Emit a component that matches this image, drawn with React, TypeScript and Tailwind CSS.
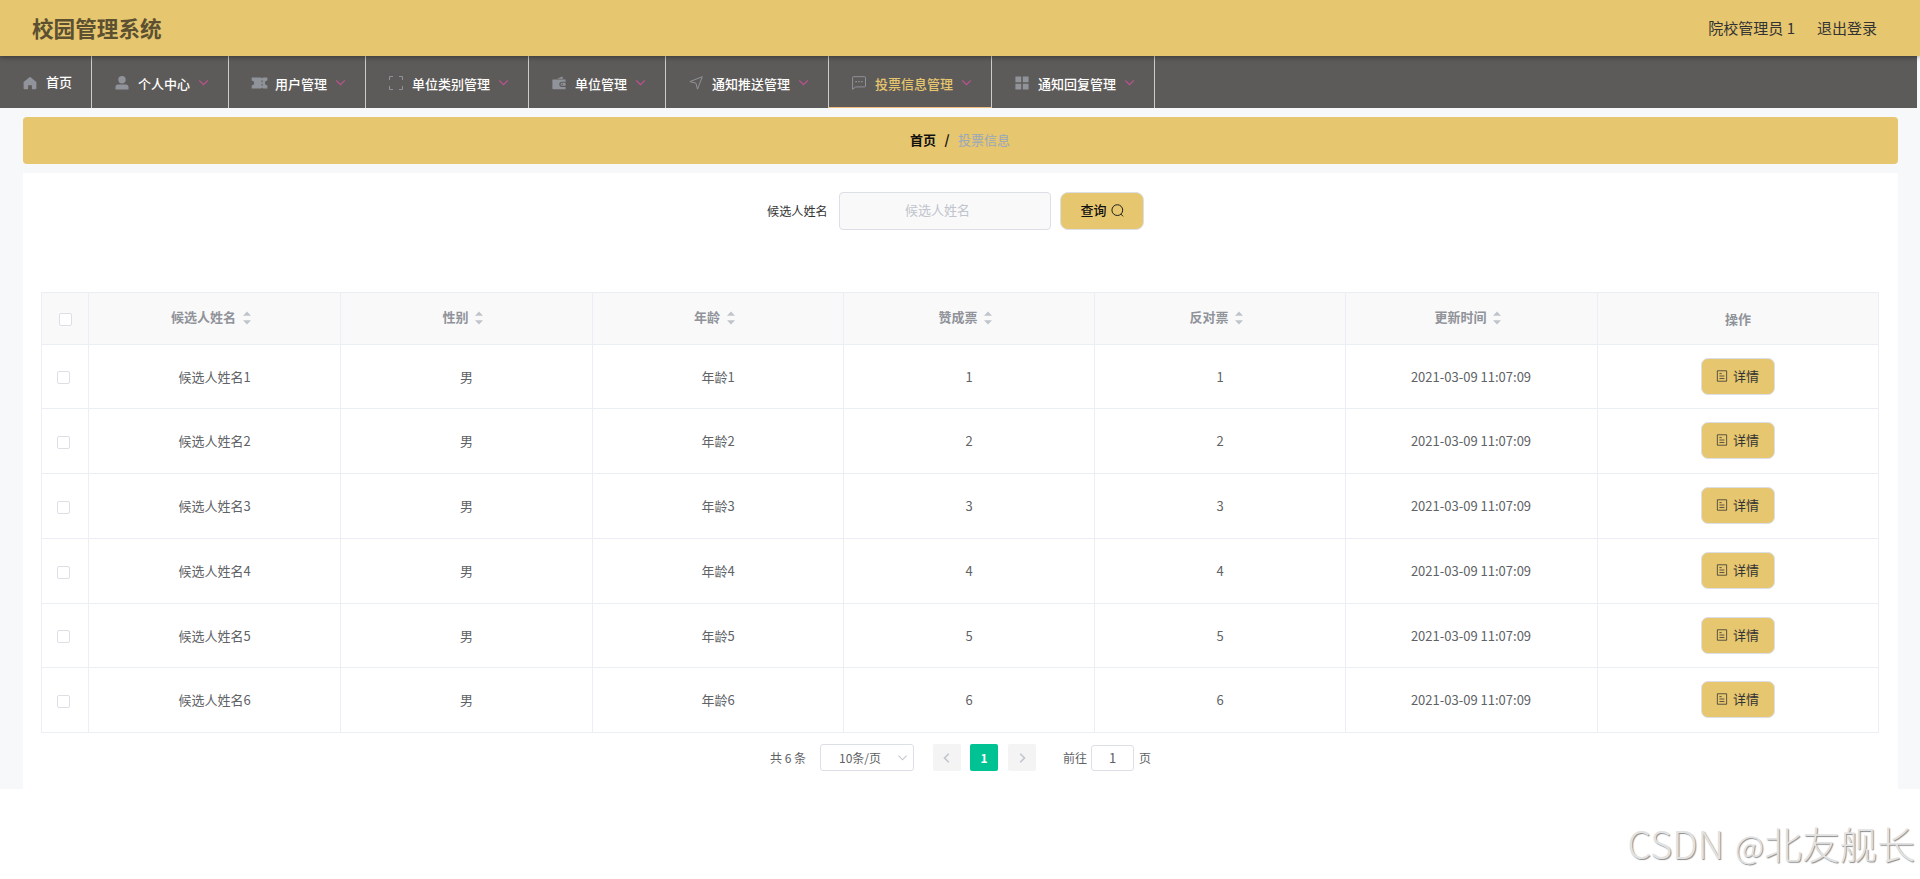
import type { ReactNode } from "react";
import { clsx } from "clsx";

interface IconProps {
  className?: string;
  children: ReactNode;
}

function Icon({ className, children }: IconProps) {
  return (
    <svg viewBox="0 0 14 14" fill="none" stroke="currentColor" className={clsx("shrink-0", className)}>
      {children}
    </svg>
  );
}

const navIcons: Record<string, ReactNode> = {
  home: (
    <path d="M7 .8 13.4 6v6.2a1 1 0 0 1-1 1H8.9V9.3H5.1v3.9H1.6a1 1 0 0 1-1-1V6z" fill="currentColor" stroke="none" />
  ),
  user: (
    <g fill="currentColor" stroke="none">
      <circle cx="7" cy="3.8" r="3.7" />
      <path d="M.5 13.4v-2.2a2.6 2.6 0 0 1 2.6-2.6h7.8a2.6 2.6 0 0 1 2.6 2.6v2.2z" />
    </g>
  ),
  ticket: (
    <g fill="currentColor" stroke="none">
      <path d="M-.3 1.5h9.4l.9 1 .9-1H15.4v3a2.5 2.5 0 0 0 0 5v3h-4.5l-.9-1-.9 1H-.3v-3a2.5 2.5 0 0 0 0-5z" />
      <path d="M9.6 4.2h.9v2h-.9zM9.6 7.8h.9v2h-.9z" fill="#5d5b59" />
    </g>
  ),
  fullscreen: <path d="M.5 4V.5H4M10 .5h3.5V4M13.5 10v3.5H10M4 13.5H.5V10" />,
  wallet: (
    <g fill="currentColor" stroke="none">
      <path d="M.4 3.4h13.2v2.3H9.9a2.6 2.6 0 0 0 0 5.2h3.7v2.4H1.2a.8.8 0 0 1-.8-.8z" />
      <path d="M5 2.8 10.2.4l1 2.4z" />
      <path d="M10 6.8h3.6v3H10a1.5 1.5 0 0 1 0-3z" />
      <circle cx="10.3" cy="8.3" r=".7" fill="#5d5b59" />
    </g>
  ),
  position: <path d="M13.3.7.9 5.6 6.9 7.2 8.5 13.2z" strokeLinejoin="round" />,
  chat: (
    <>
      <path d="M1.2.7h11.6a.7.7 0 0 1 .7.7v8.8a.7.7 0 0 1-.7.7H3.7L.6 13.3V1.4a.7.7 0 0 1 .6-.7z" />
      <path d="M3.3 5.6h1.6M6.2 5.6h1.6M9.1 5.6h1.6" strokeWidth="1.2" />
    </>
  ),
  grid: (
    <path d="M.4.6h5.8v5.6H.4zM7.8.6h5.8v5.6H7.8zM.4 7.8h5.8v5.6H.4zM7.8 7.8h5.8v5.6H7.8z" fill="currentColor" stroke="none" />
  ),
};

const navItems = [
  { label: "个人中心", icon: "user" },
  { label: "用户管理", icon: "ticket" },
  { label: "单位类别管理", icon: "fullscreen" },
  { label: "单位管理", icon: "wallet" },
  { label: "通知推送管理", icon: "position" },
  { label: "投票信息管理", icon: "chat", active: true },
  { label: "通知回复管理", icon: "grid" },
];

const columns = ["候选人姓名", "性别", "年龄", "赞成票", "反对票", "更新时间"];

const rows = [1, 2, 3, 4, 5, 6].map((n) => ({
  id: n,
  cells: [`候选人姓名${n}`, "男", `年龄${n}`, `${n}`, `${n}`, "2021-03-09 11:07:09"],
}));

const rowHeights = ["h-[64px]", "h-[65px]", "h-[65px]", "h-[65px]", "h-[64px]", "h-[65px]"];

const gridCols = "grid grid-cols-[47px_252px_252px_251px_251px_251px_252px_281px]";
const cell = "flex items-center justify-center border-r border-b border-[#ebeef5]";

function Header() {
  return (
    <header className="relative z-10 flex h-14 items-center justify-between bg-[#e6c66f] pr-[43px] pl-8 shadow-[0_1px_5px_rgba(0,0,0,0.4)]">
      <h1 className="pb-px text-[21.6px] leading-none font-bold text-[#5c5030]">校园管理系统</h1>
      <div className="flex gap-[22px] text-[15px] leading-5 text-[#333]">
        <span>院校管理员 1</span>
        <span>退出登录</span>
      </div>
    </header>
  );
}

function NavBar() {
  return (
    <nav className="flex h-[52px] w-[1917px] bg-[#5d5b59] text-[13px] font-medium text-white">
      <div className="flex w-[92px] items-center border-r border-[#ccc] pb-px pl-[23px]">
        <Icon className="mt-0.5 mr-[9px] size-3.5 text-[#909399]">{navIcons.home}</Icon>
        <span>首页</span>
      </div>
      {navItems.map((item) => (
        <div
          key={item.label}
          className={clsx(
            "flex items-center border-r border-[#ccc] pt-[3px] pl-[23px]",
            item.label.length === 4 ? "w-[137px]" : "w-[163px]",
            item.active && "text-[#e6c66f] shadow-[inset_0_-1px_0_#f0bd7c]"
          )}
        >
          <Icon className="mr-[9px] mb-px size-3.5 overflow-visible text-[#909399]">{navIcons[item.icon]}</Icon>
          <span>{item.label}</span>
          <Icon className="mb-0.5 ml-[9px] size-[9px] text-[#c0508f]">
            <path d="M.3 3.8 7 10.5l6.7-6.7" strokeWidth="1.8" />
          </Icon>
        </div>
      ))}
    </nav>
  );
}

function SearchForm() {
  return (
    <div className="flex h-[38px] items-center pl-[744px]">
      <label className="w-[72px] text-[12.15px] text-[#333]">候选人姓名</label>
      <input
        placeholder="候选人姓名"
        className="h-[38px] w-[212px] rounded border border-[#dcdfe6] bg-[#f9f9f9] pr-[27px] pb-[3px] pl-3 text-center text-[13px] outline-none placeholder:text-[#c0c4cc]"
      />
      <button className="ml-[9px] flex h-[38px] w-[84px] items-center justify-center gap-1 rounded-[8px] border border-[#dcdfe6] bg-[#e6c66f] pb-0.5 text-[13px] font-medium text-[#111]">
        查询
        <Icon className="size-[13px]">
          <circle cx="6.8" cy="6.6" r="5.8" />
          <path d="m10.6 10.8 2.4 2.5" />
        </Icon>
      </button>
    </div>
  );
}

function Checkbox() {
  return <span className="size-[13px] rounded-[2px] border border-[#dcdfe6] bg-white" />;
}

function DataTable() {
  return (
    <div className="w-[1838px] border-t border-l border-[#ebeef5] text-[13px] text-[#606266]">
      <div className={clsx(gridCols, "h-[52px] bg-[#f9f9f9] font-bold text-[#909399]")}>
        <div className={clsx(cell, "pt-0.5")}>
          <Checkbox />
        </div>
        {columns.map((title) => (
          <div key={title} className={clsx(cell, "pb-[3px]")}>
            <span>{title}</span>
            <span className="flex w-[22px] justify-center pt-0.5 pr-px">
              <svg viewBox="0 0 8 14" className="h-3.5 w-2" fill="#c0c4cc">
                <path d="M4 .4 8 4.8H0zM0 9.2h8L4 13.6z" />
              </svg>
            </span>
          </div>
        ))}
        <div className={clsx(cell, "pt-px")}>操作</div>
      </div>
      {rows.map((row, i) => (
        <div key={row.id} className={clsx(gridCols, rowHeights[i])}>
          <div className={clsx(cell, "pt-0.5 pr-1")}>
            <Checkbox />
          </div>
          {row.cells.map((value, c) => (
            <div key={c} className={clsx(cell, c === 5 && "pr-px")}>
              {value}
            </div>
          ))}
          <div className={clsx(cell, "items-start pt-[13px] pr-px")}>
            <button className="flex h-[37px] w-[74px] items-center justify-center gap-[5px] rounded-[7px] border border-[#dcdfe6] bg-[#e6c66f] pb-px text-[#333]">
              <Icon className="size-3">
                <path d="M1.6.9h10.8v12.2H1.6zM4 4.2h2.6M4 7h5.8M4 9.9h5.8" strokeWidth=".9" />
              </Icon>
              详情
            </button>
          </div>
        </div>
      ))}
    </div>
  );
}

function Pagination() {
  return (
    <div className="mt-[11px] flex h-[27px] items-center pl-[747px] text-[12px] text-[#606266]">
      <span className="w-[50px] whitespace-nowrap">共 6 条</span>
      <div className="flex h-[27px] w-[94px] items-center justify-between rounded-[3px] border border-[#dcdfe6] pr-1.5 pl-[18px]">
        <span>10条/页</span>
        <Icon className="size-[9px] text-[#c0c4cc]">
          <path d="M.7 4.2 7 10.5l6.3-6.3" strokeWidth="1.6" />
        </Icon>
      </div>
      <button className="ml-[19px] flex h-[27px] w-7 items-center justify-center rounded-[2px] bg-[#f4f4f5] text-[#c0c4cc]">
        <Icon className="size-2.5">
          <path d="M9.5 1 3.5 7l6 6" strokeWidth="2.2" />
        </Icon>
      </button>
      <button className="ml-[9px] h-[27px] w-7 rounded-[2px] bg-[#00c292] font-bold text-white">1</button>
      <button className="ml-2.5 flex h-[27px] w-7 items-center justify-center rounded-[2px] bg-[#f4f4f5] text-[#c0c4cc]">
        <Icon className="size-2.5">
          <path d="m4.5 1 6 6-6 6" strokeWidth="2.2" />
        </Icon>
      </button>
      <span className="ml-[27px]">前往</span>
      <span className="mt-px mr-[5px] ml-1 flex h-[26px] w-[43px] items-center justify-center rounded-[3px] border border-[#dcdfe6] pb-px text-[13px]">
        1
      </span>
      <span>页</span>
    </div>
  );
}

export default function App() {
  return (
    <div className="relative h-[879px] w-[1920px] overflow-hidden bg-white font-['Noto_Sans_CJK_SC',sans-serif]">
      <Header />
      <div className="h-[733px] bg-[#f7f8fa]">
        <NavBar />
        <main className="mt-[9px] ml-[23px] w-[1875px]">
          <div className="flex h-[47px] items-center justify-center rounded bg-[#e6c66f] pr-px pb-0.5 text-[13px]">
            <span className="font-bold text-[#111]">首页</span>
            <span className="mx-[8.5px] font-bold text-[#111]">/</span>
            <span className="text-[#97a8be]">投票信息</span>
          </div>
          <section className="mt-[9px] h-[616px] bg-white pt-[19px]">
            <SearchForm />
            <div className="mt-[62px] ml-[18px]">
              <DataTable />
            </div>
            <Pagination />
          </section>
        </main>
      </div>
      <div className="absolute right-[5px] bottom-[10px] flex items-baseline text-[37.7px] leading-[48px] font-light whitespace-nowrap text-[#e2e2e2] [text-shadow:1px_1px_1px_#8c8c8c]">
        <span className="mr-[11px]">CSDN</span>
        <span className="text-[32px]">@</span>
        <span>北友舰长</span>
      </div>
    </div>
  );
}
